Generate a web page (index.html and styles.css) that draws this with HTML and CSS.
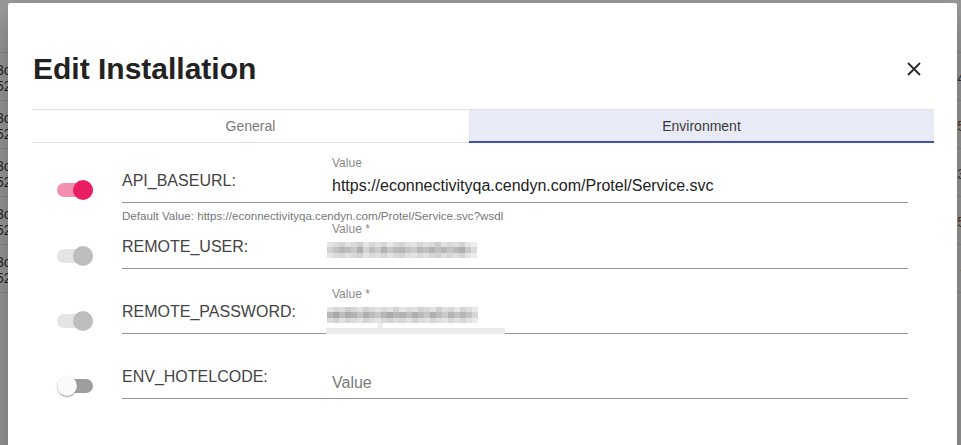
FILE: index.html
```html
<!DOCTYPE html>
<html>
<head>
<meta charset="utf-8">
<title>Edit Installation</title>
<link rel="stylesheet" href="styles.css">
</head>
<body>
<div class="page">
  <div class="bg-header"></div>
  <div class="bg-row"><span class="bg-l">3c<br>52</span><span class="bg-r c1">4</span></div>
  <div class="bg-row"><span class="bg-l">3c<br>52</span><span class="bg-r c2">5</span></div>
  <div class="bg-row"><span class="bg-l">3c<br>52</span><span class="bg-r c3">3</span></div>
  <div class="bg-row"><span class="bg-l">3c<br>52</span><span class="bg-r c2">5</span></div>
  <div class="bg-row"><span class="bg-l">3c<br>52</span><span class="bg-r c3">-</span></div>
</div>

<div class="dialog">
  <div class="header">
    <h1 class="title">Edit Installation</h1>
    <button class="close" aria-label="Close">
      <svg width="14" height="14" viewBox="0 0 14 14"><path d="M1 1L13 13M13 1L1 13" stroke="#2a2a2a" stroke-width="1.8" fill="none"/></svg>
    </button>
  </div>

  <div class="tabs">
    <div class="tab">General</div>
    <div class="tab active">Environment</div>
  </div>

  <div class="form">
    <div class="row">
      <div class="toggle-col"><span class="switch on"><span class="track"></span><span class="thumb"></span></span></div>
      <div class="field">
        <div class="label">API_BASEURL:</div>
        <div class="input">
          <div class="float">Value</div>
          <div class="value">https://econnectivityqa.cendyn.com/Protel/Service.svc</div>
        </div>
      </div>
    </div>
    <div class="helper">Default Value: https://econnectivityqa.cendyn.com/Protel/Service.svc?wsdl</div>

    <div class="row">
      <div class="toggle-col"><span class="switch disabled"><span class="track"></span><span class="thumb"></span></span></div>
      <div class="field">
        <div class="label">REMOTE_USER:</div>
        <div class="input">
          <div class="float">Value *</div>
          <div class="value">
            <svg class="mosaic" width="150" height="16" viewBox="0 0 25 3" preserveAspectRatio="none" shape-rendering="crispEdges">
              <g>
                <rect x="0" y="0" width="1" height="1" fill="#e6e6e6"/><rect x="1" y="0" width="1" height="1" fill="#dcdcdc"/><rect x="2" y="0" width="1" height="1" fill="#d4d4d4"/><rect x="3" y="0" width="1" height="1" fill="#e2e2e2"/><rect x="4" y="0" width="1" height="1" fill="#dadada"/><rect x="5" y="0" width="1" height="1" fill="#cfcfcf"/><rect x="6" y="0" width="1" height="1" fill="#e6e6e6"/><rect x="7" y="0" width="1" height="1" fill="#d6d6d6"/><rect x="8" y="0" width="1" height="1" fill="#e0e0e0"/><rect x="9" y="0" width="1" height="1" fill="#d8d8d8"/><rect x="10" y="0" width="1" height="1" fill="#e8e8e8"/><rect x="11" y="0" width="1" height="1" fill="#dadada"/><rect x="12" y="0" width="1" height="1" fill="#d2d2d2"/><rect x="13" y="0" width="1" height="1" fill="#e0e0e0"/><rect x="14" y="0" width="1" height="1" fill="#e4e4e4"/><rect x="15" y="0" width="1" height="1" fill="#d6d6d6"/><rect x="16" y="0" width="1" height="1" fill="#e0e0e0"/><rect x="17" y="0" width="1" height="1" fill="#dadada"/><rect x="18" y="0" width="1" height="1" fill="#cccccc"/><rect x="19" y="0" width="1" height="1" fill="#e2e2e2"/><rect x="20" y="0" width="1" height="1" fill="#d8d8d8"/><rect x="21" y="0" width="1" height="1" fill="#dedede"/><rect x="22" y="0" width="1" height="1" fill="#d4d4d4"/><rect x="23" y="0" width="1" height="1" fill="#e6e6e6"/><rect x="24" y="0" width="1" height="1" fill="#eeeeee"/>
                <rect x="0" y="1" width="1" height="1" fill="#d0d0d0"/><rect x="1" y="1" width="1" height="1" fill="#c2c2c2"/><rect x="2" y="1" width="1" height="1" fill="#b6b6b6"/><rect x="3" y="1" width="1" height="1" fill="#bcbcbc"/><rect x="4" y="1" width="1" height="1" fill="#c8c8c8"/><rect x="5" y="1" width="1" height="1" fill="#afafaf"/><rect x="6" y="1" width="1" height="1" fill="#d4d4d4"/><rect x="7" y="1" width="1" height="1" fill="#bfbfbf"/><rect x="8" y="1" width="1" height="1" fill="#cbcbcb"/><rect x="9" y="1" width="1" height="1" fill="#b2b2b2"/><rect x="10" y="1" width="1" height="1" fill="#c8c8c8"/><rect x="11" y="1" width="1" height="1" fill="#bababa"/><rect x="12" y="1" width="1" height="1" fill="#b6b6b6"/><rect x="13" y="1" width="1" height="1" fill="#c4c4c4"/><rect x="14" y="1" width="1" height="1" fill="#cccccc"/><rect x="15" y="1" width="1" height="1" fill="#b8b8b8"/><rect x="16" y="1" width="1" height="1" fill="#c0c0c0"/><rect x="17" y="1" width="1" height="1" fill="#b2b2b2"/><rect x="18" y="1" width="1" height="1" fill="#c0c0c0"/><rect x="19" y="1" width="1" height="1" fill="#b6b6b6"/><rect x="20" y="1" width="1" height="1" fill="#c6c6c6"/><rect x="21" y="1" width="1" height="1" fill="#bababa"/><rect x="22" y="1" width="1" height="1" fill="#aeaeae"/><rect x="23" y="1" width="1" height="1" fill="#c8c8c8"/><rect x="24" y="1" width="1" height="1" fill="#dcdcdc"/>
                <rect x="0" y="2" width="1" height="1" fill="#e4e4e4"/><rect x="1" y="2" width="1" height="1" fill="#dcdcdc"/><rect x="2" y="2" width="1" height="1" fill="#d6d6d6"/><rect x="3" y="2" width="1" height="1" fill="#e0e0e0"/><rect x="4" y="2" width="1" height="1" fill="#d8d8d8"/><rect x="5" y="2" width="1" height="1" fill="#d2d2d2"/><rect x="6" y="2" width="1" height="1" fill="#e4e4e4"/><rect x="7" y="2" width="1" height="1" fill="#dadada"/><rect x="8" y="2" width="1" height="1" fill="#e0e0e0"/><rect x="9" y="2" width="1" height="1" fill="#d6d6d6"/><rect x="10" y="2" width="1" height="1" fill="#e2e2e2"/><rect x="11" y="2" width="1" height="1" fill="#d8d8d8"/><rect x="12" y="2" width="1" height="1" fill="#d4d4d4"/><rect x="13" y="2" width="1" height="1" fill="#dedede"/><rect x="14" y="2" width="1" height="1" fill="#e2e2e2"/><rect x="15" y="2" width="1" height="1" fill="#d8d8d8"/><rect x="16" y="2" width="1" height="1" fill="#e0e0e0"/><rect x="17" y="2" width="1" height="1" fill="#d6d6d6"/><rect x="18" y="2" width="1" height="1" fill="#d0d0d0"/><rect x="19" y="2" width="1" height="1" fill="#dcdcdc"/><rect x="20" y="2" width="1" height="1" fill="#d6d6d6"/><rect x="21" y="2" width="1" height="1" fill="#dedede"/><rect x="22" y="2" width="1" height="1" fill="#d4d4d4"/><rect x="23" y="2" width="1" height="1" fill="#e4e4e4"/><rect x="24" y="2" width="1" height="1" fill="#ececec"/>
              </g>
            </svg>
          </div>
        </div>
      </div>
    </div>

    <div class="row">
      <div class="toggle-col"><span class="switch disabled"><span class="track"></span><span class="thumb"></span></span></div>
      <div class="field">
        <div class="label">REMOTE_PASSWORD:</div>
        <div class="input">
          <div class="float">Value *</div>
          <div class="value">
            <svg class="mosaic" width="151" height="16" viewBox="0 0 25 3" preserveAspectRatio="none" shape-rendering="crispEdges">
              <g>
                <rect x="0" y="0" width="1" height="1" fill="#e4e4e4"/><rect x="1" y="0" width="1" height="1" fill="#d8d8d8"/><rect x="2" y="0" width="1" height="1" fill="#dedede"/><rect x="3" y="0" width="1" height="1" fill="#cccccc"/><rect x="4" y="0" width="1" height="1" fill="#d6d6d6"/><rect x="5" y="0" width="1" height="1" fill="#e2e2e2"/><rect x="6" y="0" width="1" height="1" fill="#d2d2d2"/><rect x="7" y="0" width="1" height="1" fill="#dcdcdc"/><rect x="8" y="0" width="1" height="1" fill="#e4e4e4"/><rect x="9" y="0" width="1" height="1" fill="#dadada"/><rect x="10" y="0" width="1" height="1" fill="#e2e2e2"/><rect x="11" y="0" width="1" height="1" fill="#d4d4d4"/><rect x="12" y="0" width="1" height="1" fill="#e6e6e6"/><rect x="13" y="0" width="1" height="1" fill="#dcdcdc"/><rect x="14" y="0" width="1" height="1" fill="#e0e0e0"/><rect x="15" y="0" width="1" height="1" fill="#d2d2d2"/><rect x="16" y="0" width="1" height="1" fill="#dadada"/><rect x="17" y="0" width="1" height="1" fill="#e2e2e2"/><rect x="18" y="0" width="1" height="1" fill="#d0d0d0"/><rect x="19" y="0" width="1" height="1" fill="#e0e0e0"/><rect x="20" y="0" width="1" height="1" fill="#d8d8d8"/><rect x="21" y="0" width="1" height="1" fill="#e6e6e6"/><rect x="22" y="0" width="1" height="1" fill="#d4d4d4"/><rect x="23" y="0" width="1" height="1" fill="#dcdcdc"/><rect x="24" y="0" width="1" height="1" fill="#e8e8e8"/>
                <rect x="0" y="1" width="1" height="1" fill="#b8b8b8"/><rect x="1" y="1" width="1" height="1" fill="#a8a8a8"/><rect x="2" y="1" width="1" height="1" fill="#bcbcbc"/><rect x="3" y="1" width="1" height="1" fill="#acacac"/><rect x="4" y="1" width="1" height="1" fill="#b4b4b4"/><rect x="5" y="1" width="1" height="1" fill="#c4c4c4"/><rect x="6" y="1" width="1" height="1" fill="#b0b0b0"/><rect x="7" y="1" width="1" height="1" fill="#bcbcbc"/><rect x="8" y="1" width="1" height="1" fill="#c8c8c8"/><rect x="9" y="1" width="1" height="1" fill="#b6b6b6"/><rect x="10" y="1" width="1" height="1" fill="#aaaaaa"/><rect x="11" y="1" width="1" height="1" fill="#b8b8b8"/><rect x="12" y="1" width="1" height="1" fill="#b2b2b2"/><rect x="13" y="1" width="1" height="1" fill="#c0c0c0"/><rect x="14" y="1" width="1" height="1" fill="#aeaeae"/><rect x="15" y="1" width="1" height="1" fill="#bababa"/><rect x="16" y="1" width="1" height="1" fill="#c6c6c6"/><rect x="17" y="1" width="1" height="1" fill="#b0b0b0"/><rect x="18" y="1" width="1" height="1" fill="#bcbcbc"/><rect x="19" y="1" width="1" height="1" fill="#cacaca"/><rect x="20" y="1" width="1" height="1" fill="#b4b4b4"/><rect x="21" y="1" width="1" height="1" fill="#c2c2c2"/><rect x="22" y="1" width="1" height="1" fill="#b6b6b6"/><rect x="23" y="1" width="1" height="1" fill="#c4c4c4"/><rect x="24" y="1" width="1" height="1" fill="#d6d6d6"/>
                <rect x="0" y="2" width="1" height="1" fill="#dcdcdc"/><rect x="1" y="2" width="1" height="1" fill="#d2d2d2"/><rect x="2" y="2" width="1" height="1" fill="#e0e0e0"/><rect x="3" y="2" width="1" height="1" fill="#d6d6d6"/><rect x="4" y="2" width="1" height="1" fill="#dadada"/><rect x="5" y="2" width="1" height="1" fill="#e2e2e2"/><rect x="6" y="2" width="1" height="1" fill="#d4d4d4"/><rect x="7" y="2" width="1" height="1" fill="#dedede"/><rect x="8" y="2" width="1" height="1" fill="#e4e4e4"/><rect x="9" y="2" width="1" height="1" fill="#d8d8d8"/><rect x="10" y="2" width="1" height="1" fill="#d2d2d2"/><rect x="11" y="2" width="1" height="1" fill="#dcdcdc"/><rect x="12" y="2" width="1" height="1" fill="#d8d8d8"/><rect x="13" y="2" width="1" height="1" fill="#e0e0e0"/><rect x="14" y="2" width="1" height="1" fill="#d4d4d4"/><rect x="15" y="2" width="1" height="1" fill="#dcdcdc"/><rect x="16" y="2" width="1" height="1" fill="#e2e2e2"/><rect x="17" y="2" width="1" height="1" fill="#d6d6d6"/><rect x="18" y="2" width="1" height="1" fill="#dedede"/><rect x="19" y="2" width="1" height="1" fill="#e4e4e4"/><rect x="20" y="2" width="1" height="1" fill="#d8d8d8"/><rect x="21" y="2" width="1" height="1" fill="#e0e0e0"/><rect x="22" y="2" width="1" height="1" fill="#d8d8d8"/><rect x="23" y="2" width="1" height="1" fill="#e2e2e2"/><rect x="24" y="2" width="1" height="1" fill="#eaeaea"/>
              </g>
            </svg>
          </div>
        </div>
        <span class="autofill"><span class="autofill-tick"></span></span>
      </div>
    </div>

    <div class="row">
      <div class="toggle-col"><span class="switch off"><span class="track"></span><span class="thumb"></span></span></div>
      <div class="field">
        <div class="label">ENV_HOTELCODE:</div>
        <div class="input">
          <div class="float"></div>
          <div class="value placeholder">Value</div>
        </div>
      </div>
    </div>
  </div>
</div>
</body>
</html>
```

FILE: styles.css
```css
* { box-sizing: border-box; }

html, body {
  margin: 0;
  padding: 0;
  width: 961px;
  height: 445px;
  overflow: hidden;
  background: #9e9e9e;
  font-family: "Liberation Sans", Arial, sans-serif;
}

.page {
  width: 961px;
}

.bg-header {
  height: 53px;
  border-bottom: 1px solid #8c8c8c;
}

.bg-row {
  height: 48px;
  border-bottom: 1px solid #8c8c8c;
  display: flex;
  justify-content: space-between;
  font-size: 14px;
  line-height: 16px;
}

.bg-l {
  padding-top: 9px;
  margin-left: -4px;
  color: #2b2b2b;
}

.bg-r {
  padding-top: 17px;
  margin-right: -4px;
  font-size: 14px;
}
.c1 { color: #3b2f4f; }
.c2 { color: #5a3a22; }
.c3 { color: #3a3a3a; }

.dialog {
  position: absolute;
  left: 8px;
  top: 3px;
  width: 949px;
  height: 470px;
  background: #ffffff;
  border-radius: 2px;
  box-shadow: 0 11px 15px -7px rgba(0,0,0,.2), 0 24px 38px 3px rgba(0,0,0,.14), 0 9px 46px 8px rgba(0,0,0,.12);
  padding: 48px 23px 0 24px;
}

.header {
  display: flex;
  justify-content: space-between;
  align-items: center;
  height: 36px;
}

.title {
  margin: 0;
  font-size: 30px;
  line-height: 36px;
  font-weight: 700;
  color: #222222;
  padding-left: 1px;
}

.close {
  width: 24px;
  height: 24px;
  margin-right: 8px;
  border: 0;
  padding: 0;
  background: transparent;
  display: flex;
  align-items: center;
  justify-content: center;
}

.close svg { display: block; }

.tabs {
  margin-top: 22px;
  display: grid;
  grid-template-columns: 437px 1fr;
  border-top: 1px solid #e2e2e2;
}

.tab {
  height: 33px;
  display: flex;
  align-items: center;
  justify-content: center;
  font-size: 14px;
  color: #7a7a7a;
  border-bottom: 1px solid #e2e2e2;
}

.tab.active {
  background: #e8eaf6;
  color: #3a3a3a;
  border-bottom: 2px solid #3f51b5;
}

.form {
  padding-top: 13px;
}

.row {
  display: flex;
  margin-bottom: 18px;
}

.helper {
  margin-top: -18px;
  height: 19px;
  padding-top: 6px;
  padding-left: 90px;
  font-size: 11.6px;
  line-height: 13px;
  color: #777777;
}

.toggle-col {
  width: 90px;
  padding-left: 25px;
  display: flex;
  align-items: flex-end;
  padding-bottom: 3px;
}

.switch {
  position: relative;
  width: 36px;
  height: 20px;
  display: block;
}

.track {
  position: absolute;
  left: 0;
  top: 3px;
  width: 36px;
  height: 14px;
  border-radius: 7px;
  background: #9e9e9e;
}

.thumb {
  position: absolute;
  top: 0;
  left: 0;
  width: 20px;
  height: 20px;
  border-radius: 50%;
  background: #fafafa;
  box-shadow: 0 2px 1px -1px rgba(0,0,0,.2), 0 1px 1px 0 rgba(0,0,0,.14), 0 1px 3px 0 rgba(0,0,0,.12);
}

.switch.on .track { background: #f48fb1; }
.switch.on .thumb { left: 16px; background: #e91e63; box-shadow: none; }

.switch.disabled .track { background: #e4e4e4; }
.switch.disabled .thumb { left: 16px; background: #bdbdbd; box-shadow: none; }

.field {
  position: relative;
  width: 786px;
  display: flex;
  border-bottom: 1px solid #949494;
}

.label {
  width: 210px;
  align-self: flex-end;
  font-size: 16px;
  line-height: 20px;
  padding-bottom: 11px;
  color: #444444;
}

.input {
  flex: 1;
}

.float {
  height: 14px;
  font-size: 12px;
  line-height: 14px;
  color: #8a8a8a;
}

.value {
  margin-top: 6px;
  height: 20px;
  margin-bottom: 6px;
  font-size: 16px;
  line-height: 20px;
  color: #222222;
}

.value.placeholder {
  color: #7a7a7a;
  padding-top: 1px;
}

.mosaic {
  display: block;
  margin-top: 3px;
  margin-left: -5px;
}

.autofill {
  position: absolute;
  left: 204px;
  top: 41px;
  width: 179px;
  height: 6px;
  background: #ececec;
}

.autofill-tick {
  position: absolute;
  left: 52px;
  top: -5px;
  width: 5px;
  height: 5px;
  background: #ececec;
}
```
